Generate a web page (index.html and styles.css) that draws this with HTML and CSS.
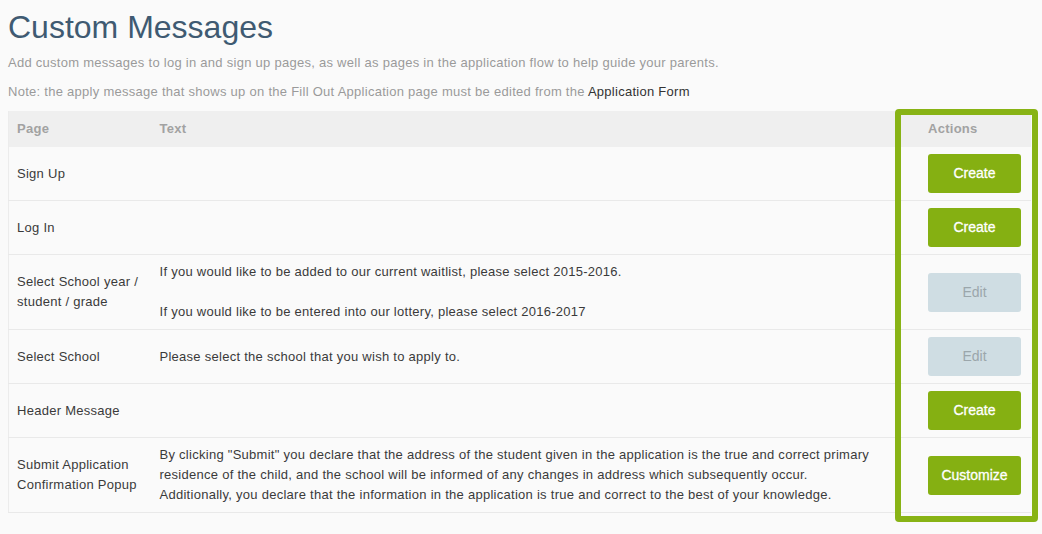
FILE: index.html
```html
<!DOCTYPE html>
<html>

<head>
    <meta charset="utf-8" />
    <title>Custom Messages</title>
    <link rel="stylesheet" href="styles.css">
</head>

<body>
    <div id="page">
        <h1>Custom Messages</h1>
        <p class="intro">Add custom messages to log in and sign up pages, as well as pages in the application flow to help guide your parents.</p>
        <p class="intro">Note: the apply message that shows up on the Fill Out Application page must be edited from the <a href="#">Application Form</a></p>

        <div class="table-wrap">
            <table class="messages">
                <thead>
                    <tr>
                        <th class="col-page">Page</th>
                        <th class="col-text">Text</th>
                        <th class="col-actions">Actions</th>
                    </tr>
                </thead>
                <tbody>
                    <tr>
                        <td>Sign Up</td>
                        <td class="msg"></td>
                        <td><a href="#" class="btn">Create</a></td>
                    </tr>
                    <tr>
                        <td>Log In</td>
                        <td class="msg"></td>
                        <td><a href="#" class="btn">Create</a></td>
                    </tr>
                    <tr>
                        <td>Select School year / student / grade</td>
                        <td class="msg">
                            <p>If you would like to be added to our current waitlist, please select 2015-2016.</p>
                            <p>If you would like to be entered into our lottery, please select 2016-2017</p>
                        </td>
                        <td><a href="#" class="btn disabled">Edit</a></td>
                    </tr>
                    <tr>
                        <td>Select School</td>
                        <td class="msg">Please select the school that you wish to apply to.</td>
                        <td><a href="#" class="btn disabled">Edit</a></td>
                    </tr>
                    <tr>
                        <td>Header Message</td>
                        <td class="msg"></td>
                        <td><a href="#" class="btn">Create</a></td>
                    </tr>
                    <tr>
                        <td>Submit Application Confirmation Popup</td>
                        <td class="msg">By clicking "Submit" you declare that the address of the student given in the application is the true and correct primary residence of the child, and the school will be informed of any changes in address which subsequently occur. Additionally, you declare that the information in the application is true and correct to the best of your knowledge.</td>
                        <td><a href="#" class="btn">Customize</a></td>
                    </tr>
                </tbody>
            </table>
            <!-- highlight round the actions column -->
            <div class="highlight"></div>
        </div>
    </div>
</body>

</html>
```

FILE: styles.css
```css
* {
    margin: 0;
    padding: 0;
    box-sizing: border-box;
}

html,
body {
    background: #fafafa;
}

body {
    font-family: "Helvetica Neue", "Liberation Sans", Arial, sans-serif;
    font-size: 13px;
    line-height: 20px;
    letter-spacing: 0.27px;
    color: #3a3a3a;
}

#page {
    padding: 0 8px 21px;
}

h1 {
    margin: 7px 0 6px;
    font-size: 32px;
    line-height: 40px;
    font-weight: normal;
    letter-spacing: 0;
    color: #3f5a72;
}

.intro {
    margin-bottom: 9px;
    color: #9a9a9a;
}

.intro a {
    color: #333;
    text-decoration: none;
}

.table-wrap {
    position: relative;
    width: 1023px;
}

.messages {
    width: 100%;
    border-collapse: collapse;
    border-left: 1px solid #ececec;
    table-layout: fixed;
}

.messages th {
    background: #efefef;
    color: #a2a2a2;
    font-weight: bold;
    text-align: left;
    padding: 8px;
}

.messages td {
    padding: 7px 8px;
    vertical-align: middle;
    border-bottom: 1px solid #e9e9e9;
}

.messages td.msg {
    padding-right: 45px;
}

.messages td p + p {
    margin-top: 20px;
}

.col-page {
    width: 143px;
}

.col-actions {
    width: 111px;
}

.btn {
    display: block;
    width: 93px;
    height: 39px;
    line-height: 39px;
    border-radius: 3px;
    background: #85b012;
    color: #fff;
    font-size: 14px;
    letter-spacing: 0;
    -webkit-text-stroke: 0.3px #fff;
    text-align: center;
    text-decoration: none;
}

.btn.disabled {
    background: #cfdde3;
    color: #9ba6ab;
    -webkit-text-stroke: 0;
}

.highlight {
    position: absolute;
    left: 887px;
    top: -2px;
    width: 143px;
    bottom: -9px;
    border: 6px solid #88b315;
    border-radius: 4px;
}
```
